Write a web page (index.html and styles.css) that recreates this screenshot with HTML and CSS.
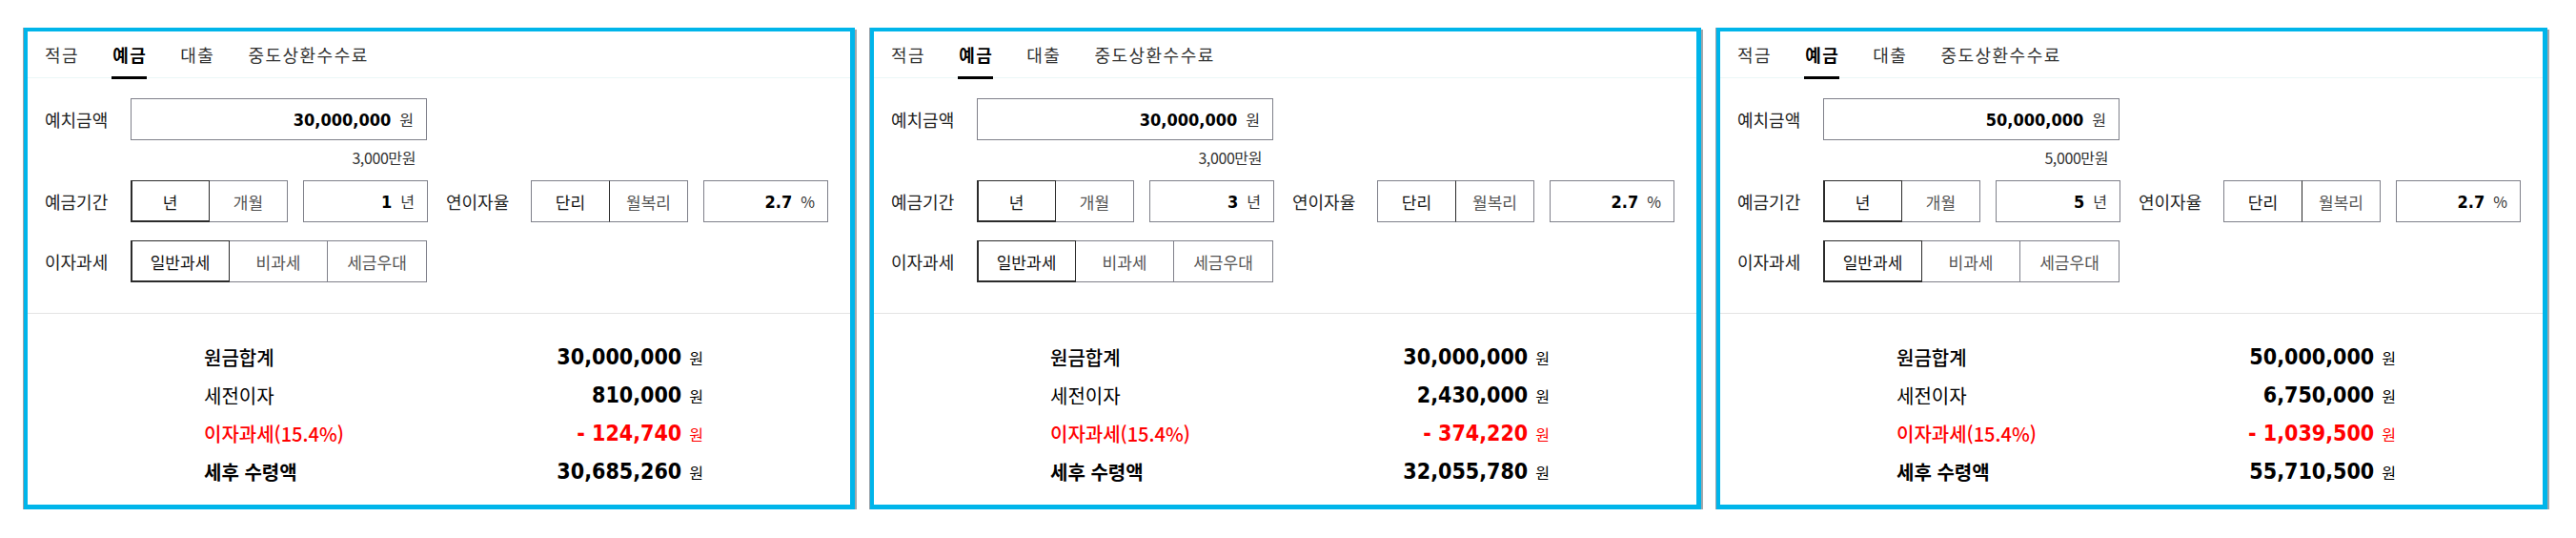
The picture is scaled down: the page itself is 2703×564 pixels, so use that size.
FILE: index.html
```html
<!DOCTYPE html>
<html lang="ko">
<head>
    <meta charset="UTF-8">
    <meta name="viewport" content="width=device-width, initial-scale=1.0">
    <title>예금 계산기</title>
    <link rel="stylesheet" href="styles.css">
</head>
<body>
    <div class="calc-list">

        <!-- 1년 -->
        <div class="calc">
            <nav class="tabs">
                <a class="tab">적금</a>
                <a class="tab active">예금</a>
                <a class="tab">대출</a>
                <a class="tab">중도상환수수료</a>
            </nav>

            <div class="form">
                <div class="row">
                    <span class="label">예치금액</span>
                    <div class="field field-amount"><b class="num">30,000,000</b><span class="unit">원</span></div>
                </div>
                <div class="hint">3,000만원</div>

                <div class="row row-period">
                    <span class="label">예금기간</span>
                    <div class="seg">
                        <button class="seg-btn active">년</button>
                        <button class="seg-btn">개월</button>
                    </div>
                    <div class="field field-short"><b class="num">1</b><span class="unit">년</span></div>
                    <span class="label label-mid">연이자율</span>
                    <div class="seg">
                        <button class="seg-btn picked">단리</button>
                        <button class="seg-btn">월복리</button>
                    </div>
                    <div class="field field-short"><b class="num">2.7</b><span class="unit">%</span></div>
                </div>

                <div class="row row-tax">
                    <span class="label">이자과세</span>
                    <div class="seg seg-wide">
                        <button class="seg-btn active">일반과세</button>
                        <button class="seg-btn">비과세</button>
                        <button class="seg-btn">세금우대</button>
                    </div>
                </div>
            </div>

            <div class="result">
                <div class="result-row">
                    <span class="result-label semi">원금합계</span>
                    <span class="result-value"><b>30,000,000</b><span class="unit">원</span></span>
                </div>
                <div class="result-row">
                    <span class="result-label">세전이자</span>
                    <span class="result-value"><b>810,000</b><span class="unit">원</span></span>
                </div>
                <div class="result-row minus">
                    <span class="result-label semi">이자과세(15.4%)</span>
                    <span class="result-value"><b>- 124,740</b><span class="unit">원</span></span>
                </div>
                <div class="result-row">
                    <span class="result-label strong">세후 수령액</span>
                    <span class="result-value"><b>30,685,260</b><span class="unit">원</span></span>
                </div>
            </div>
        </div>

        <!-- 3년 -->
        <div class="calc">
            <nav class="tabs">
                <a class="tab">적금</a>
                <a class="tab active">예금</a>
                <a class="tab">대출</a>
                <a class="tab">중도상환수수료</a>
            </nav>

            <div class="form">
                <div class="row">
                    <span class="label">예치금액</span>
                    <div class="field field-amount"><b class="num">30,000,000</b><span class="unit">원</span></div>
                </div>
                <div class="hint">3,000만원</div>

                <div class="row row-period">
                    <span class="label">예금기간</span>
                    <div class="seg">
                        <button class="seg-btn active">년</button>
                        <button class="seg-btn">개월</button>
                    </div>
                    <div class="field field-short"><b class="num">3</b><span class="unit">년</span></div>
                    <span class="label label-mid">연이자율</span>
                    <div class="seg">
                        <button class="seg-btn picked">단리</button>
                        <button class="seg-btn">월복리</button>
                    </div>
                    <div class="field field-short"><b class="num">2.7</b><span class="unit">%</span></div>
                </div>

                <div class="row row-tax">
                    <span class="label">이자과세</span>
                    <div class="seg seg-wide">
                        <button class="seg-btn active">일반과세</button>
                        <button class="seg-btn">비과세</button>
                        <button class="seg-btn">세금우대</button>
                    </div>
                </div>
            </div>

            <div class="result">
                <div class="result-row">
                    <span class="result-label semi">원금합계</span>
                    <span class="result-value"><b>30,000,000</b><span class="unit">원</span></span>
                </div>
                <div class="result-row">
                    <span class="result-label">세전이자</span>
                    <span class="result-value"><b>2,430,000</b><span class="unit">원</span></span>
                </div>
                <div class="result-row minus">
                    <span class="result-label semi">이자과세(15.4%)</span>
                    <span class="result-value"><b>- 374,220</b><span class="unit">원</span></span>
                </div>
                <div class="result-row">
                    <span class="result-label strong">세후 수령액</span>
                    <span class="result-value"><b>32,055,780</b><span class="unit">원</span></span>
                </div>
            </div>
        </div>

        <!-- 5년 -->
        <div class="calc">
            <nav class="tabs">
                <a class="tab">적금</a>
                <a class="tab active">예금</a>
                <a class="tab">대출</a>
                <a class="tab">중도상환수수료</a>
            </nav>

            <div class="form">
                <div class="row">
                    <span class="label">예치금액</span>
                    <div class="field field-amount"><b class="num">50,000,000</b><span class="unit">원</span></div>
                </div>
                <div class="hint">5,000만원</div>

                <div class="row row-period">
                    <span class="label">예금기간</span>
                    <div class="seg">
                        <button class="seg-btn active">년</button>
                        <button class="seg-btn">개월</button>
                    </div>
                    <div class="field field-short"><b class="num">5</b><span class="unit">년</span></div>
                    <span class="label label-mid">연이자율</span>
                    <div class="seg">
                        <button class="seg-btn picked">단리</button>
                        <button class="seg-btn">월복리</button>
                    </div>
                    <div class="field field-short"><b class="num">2.7</b><span class="unit">%</span></div>
                </div>

                <div class="row row-tax">
                    <span class="label">이자과세</span>
                    <div class="seg seg-wide">
                        <button class="seg-btn active">일반과세</button>
                        <button class="seg-btn">비과세</button>
                        <button class="seg-btn">세금우대</button>
                    </div>
                </div>
            </div>

            <div class="result">
                <div class="result-row">
                    <span class="result-label semi">원금합계</span>
                    <span class="result-value"><b>50,000,000</b><span class="unit">원</span></span>
                </div>
                <div class="result-row">
                    <span class="result-label">세전이자</span>
                    <span class="result-value"><b>6,750,000</b><span class="unit">원</span></span>
                </div>
                <div class="result-row minus">
                    <span class="result-label semi">이자과세(15.4%)</span>
                    <span class="result-value"><b>- 1,039,500</b><span class="unit">원</span></span>
                </div>
                <div class="result-row">
                    <span class="result-label strong">세후 수령액</span>
                    <span class="result-value"><b>55,710,500</b><span class="unit">원</span></span>
                </div>
            </div>
        </div>

    </div>
</body>
</html>
```

FILE: styles.css
```css
body {
    margin: 0;
    padding: 29px 0 0 25px;
    background-color: #fff;
    color: #222;
    font-family: "Noto Sans CJK KR", "Noto Sans", sans-serif;
}

.calc-list {
    display: flex;
    gap: 16px;
}

.calc {
    width: 872px;
    box-sizing: border-box;
    border-style: solid;
    border-color: #00b5ea;
    border-width: 4px 5px 5px 4px;
    box-shadow: -1px 0 0 #9aa3ab, 2px 2px 0 #a3a7ab;
    background: #fff;
}

/* Tabs */
.tabs {
    display: flex;
    gap: 34px;
    height: 48px;
    padding: 0 17px;
    border-bottom: 1px solid #ebf7f7;
}

.tab {
    display: flex;
    align-items: center;
    box-sizing: border-box;
    height: 50px;
    margin-bottom: -2px;
    padding: 0 0 0 1px;
    border-bottom: 3px solid transparent;
    font-size: 18px;
    letter-spacing: 1.5px;
    color: #333;
    cursor: pointer;
}

.tab.active {
    border-bottom-color: #000;
    color: #000;
    font-weight: 700;
}

/* Form */
.form {
    padding: 21px 18px 32px;
    border-bottom: 1px solid #e4e4e4;
}

.row {
    display: flex;
    align-items: center;
}

.row-period {
    margin-top: 14px;
}

.row-tax {
    margin-top: 19px;
}

.label {
    width: 90px;
    flex-shrink: 0;
    font-size: 18px;
    color: #222;
}

.label-mid {
    width: 89px;
    margin-left: 19px;
}

.field {
    display: flex;
    align-items: center;
    justify-content: flex-end;
    gap: 9px;
    box-sizing: border-box;
    height: 44px;
    padding-right: 13px;
    border: 1px solid #7f808a;
    background: #fff;
}

.field-amount {
    width: 311px;
}

.field-short {
    width: 131px;
    margin-left: 16px;
}

.num {
    font-family: "DejaVu Sans Condensed", "DejaVu Sans", sans-serif;
    font-stretch: condensed;
    font-size: 18px;
    font-weight: 700;
    color: #000;
}

.field .unit {
    font-size: 16px;
    color: #333;
}

.hint {
    width: 311px;
    margin: 8px 0 0 90px;
    box-sizing: border-box;
    padding-right: 12px;
    text-align: right;
    font-size: 16px;
    line-height: 20px;
    letter-spacing: -0.4px;
    color: #333;
}

/* Segmented buttons */
.seg {
    display: flex;
}

.seg-btn {
    width: 83px;
    height: 44px;
    margin-left: -1px;
    padding: 0;
    border: 1px solid #7f808a;
    background: #fff;
    font-family: inherit;
    font-size: 17px;
    color: #555;
    cursor: pointer;
}

.seg-btn:first-child {
    margin-left: 0;
}

.seg-btn.active {
    position: relative;
    z-index: 1;
    border-color: #2b2b2b;
    box-shadow: inset 1px -1px 0 #2b2b2b;
    color: #111;
}

.seg-btn.picked {
    position: relative;
    z-index: 1;
    border-right-color: #2b2b2b;
    color: #111;
}

.seg-wide .seg-btn {
    width: 104px;
}

.seg-wide .seg-btn:last-child {
    width: 105px;
}

/* Result */
.result {
    padding: 25px 0 15px 185px;
}

.result-row {
    display: flex;
    align-items: center;
    justify-content: space-between;
    width: 524px;
    height: 40px;
}

.result-label {
    font-size: 20px;
    color: #000;
}

.result-label.semi {
    font-weight: 500;
}

.result-label.strong {
    font-weight: 700;
}

.result-value {
    display: flex;
    align-items: baseline;
    gap: 8px;
    color: #000;
}

.result-value b {
    font-family: "DejaVu Sans Condensed", "DejaVu Sans", sans-serif;
    font-stretch: condensed;
    font-size: 23px;
    font-weight: 700;
}

.result-value .unit {
    font-size: 16px;
}

.minus,
.minus .result-label,
.minus .result-value {
    color: #ff0000;
}
```
